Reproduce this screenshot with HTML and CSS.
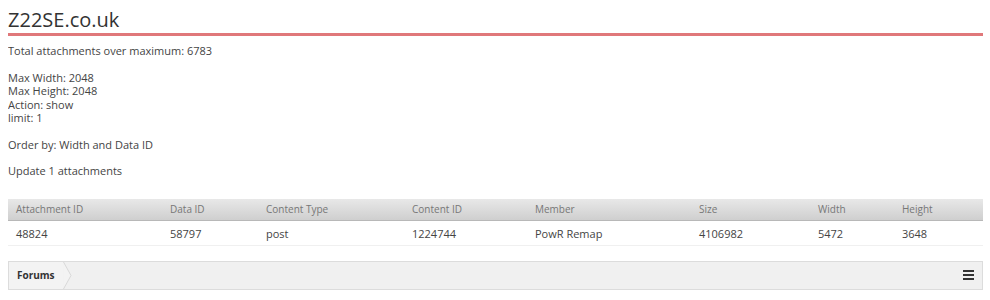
FILE: index.html
```html
<!DOCTYPE html>
<html lang="en">
<head>
  <meta charset="UTF-8" />
  <title>Z22SE.co.uk</title>
  <link rel="stylesheet" href="styles.css">
</head>
<body>

  <h1 class="site-title">Z22SE.co.uk</h1>

  <div class="report">
    <p>Total attachments over maximum: 6783</p>
    <p>Max Width: 2048<br>Max Height: 2048<br>Action: show<br>limit: 1</p>
    <p>Order by: Width and Data ID</p>
    <p>Update 1 attachments</p>
  </div>

  <table class="attachments">
    <colgroup>
      <col class="c1"><col class="c2"><col class="c3"><col class="c4">
      <col class="c5"><col class="c6"><col class="c7"><col class="c8">
    </colgroup>
    <thead>
      <tr>
        <th>Attachment ID</th>
        <th>Data ID</th>
        <th>Content Type</th>
        <th>Content ID</th>
        <th>Member</th>
        <th>Size</th>
        <th>Width</th>
        <th>Height</th>
      </tr>
    </thead>
    <tbody>
      <tr>
        <td>48824</td>
        <td>58797</td>
        <td>post</td>
        <td>1224744</td>
        <td>PowR Remap</td>
        <td>4106982</td>
        <td>5472</td>
        <td>3648</td>
      </tr>
    </tbody>
  </table>

  <div class="breadcrumb">
    <a class="crumb" href="#">Forums</a>
    <svg class="chevron" width="9" height="27" viewBox="0 0 9 27">
      <polyline points="0.5,0 8,13.5 0.5,27" fill="#f3f3f3" stroke="#d8d8d8" stroke-width="1"/>
    </svg>
    <span class="spacer"></span>
    <span class="menu-icon">
      <svg width="11" height="10" viewBox="0 0 11 10">
        <rect x="0" y="0" width="11" height="2" fill="#333"/>
        <rect x="0" y="4" width="11" height="2" fill="#333"/>
        <rect x="0" y="8" width="11" height="2" fill="#333"/>
      </svg>
    </span>
  </div>

</body>
</html>
```

FILE: styles.css
```css
body {
  margin: 8px 7px 8px 8px;
  background: #fff;
  font-family: 'Open Sans', sans-serif;
  font-size: 11px;
  color: #444;
}

.site-title {
  margin: 0;
  padding: 0 0 2px 0;
  font-size: 20px;
  font-weight: normal;
  line-height: 23px;
  color: #333;
  border-bottom: 3px solid #e0787a;
}

.report {
  padding-top: 8px;
}

.report p {
  margin: 0 0 13px 0;
  line-height: 13.5px;
}

.attachments {
  width: 100%;
  margin-top: 21px;
  border-collapse: collapse;
}

.c1 { width: 154px; }
.c2 { width: 96px; }
.c3 { width: 146px; }
.c4 { width: 123px; }
.c5 { width: 164px; }
.c6 { width: 119px; }
.c7 { width: 84px; }

.attachments th {
  padding: 4px 8px 4px 8px;
  line-height: 13px;
  text-align: left;
  font-weight: normal;
  font-size: 10px;
  color: #777;
  background: linear-gradient(#e8e8e8, #cfcfcf);
  border-bottom: 1px solid #b8b8b8;
}

.attachments td {
  padding: 5px 8px 4px 8px;
  line-height: 15px;
  font-size: 11px;
  color: #444;
  border-bottom: 1px solid #f0f0f0;
}

.breadcrumb {
  display: flex;
  align-items: stretch;
  margin-top: 15px;
  height: 27px;
  background: #f0f0f0;
  border: 1px solid #dcdcdc;
}

.crumb {
  display: flex;
  align-items: center;
  padding: 0 8px 0 8px;
  font-size: 10px;
  font-weight: bold;
  color: #333;
  text-decoration: none;
  background: #f3f3f3;
}

.chevron {
  display: block;
}

.spacer {
  flex: 1;
}

.menu-icon {
  display: flex;
  align-items: center;
  padding-right: 8px;
}
```
